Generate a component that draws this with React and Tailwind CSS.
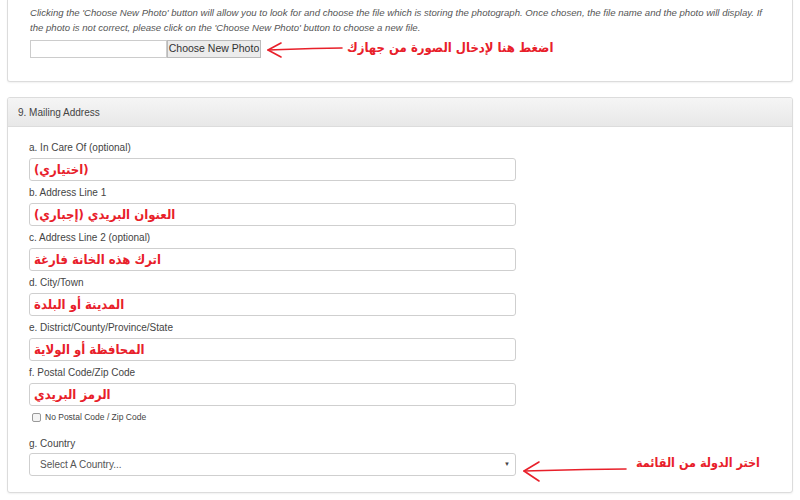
import React from "react";

const AR = { fontFamily: '"DejaVu Sans Condensed", "DejaVu Sans", sans-serif' };

function ArInput({ text }) {
  return (
    <div className="h-[23px] w-[487px] rounded-[3px] border border-[#cfcfcf] bg-white flex items-center pl-[4px] overflow-hidden">
      <span dir="rtl" className="text-[13px] font-bold text-[#e8202a] leading-none" style={AR}>{text}</span>
    </div>
  );
}

function Field({ label, text }) {
  return (
    <div className="flex flex-col">
      <div className="h-[22px] flex items-center text-[10px] text-[#444]">{label}</div>
      <ArInput text={text} />
    </div>
  );
}

function Arrow({ w, big }) {
  return (
    <svg width={w} height="24" viewBox={`0 0 ${w} 24`} className="shrink-0">
      <path d={`M2 12 Q ${w * 0.4} 11 ${w * 0.6} 10.5 T ${w - 2} 10`} stroke="#e8202a" strokeWidth="1.6" fill="none" strokeLinecap="round" />
      {big ? (
        <path d="M17 3 L2 12 L17 22" stroke="#e8202a" strokeWidth="1.6" fill="none" strokeLinecap="round" strokeLinejoin="round" />
      ) : (
        <path d="M15 5 L2 12 L15 19" stroke="#e8202a" strokeWidth="1.6" fill="none" strokeLinecap="round" strokeLinejoin="round" />
      )}
    </svg>
  );
}

export default function App() {
  return (
    <div className="w-[800px] h-[500px] overflow-hidden bg-white px-[7px] text-[#444]" style={{ fontFamily: '"Liberation Sans", Arial, sans-serif' }}>
      <div className="border border-t-0 border-[#dcdcdc] rounded-b-[3px] shadow-[0_1px_2px_rgba(0,0,0,0.06)] bg-white pl-[22px] pr-[24px] pt-[5px] h-[82px]">
        <p className="text-[9.6px] italic leading-[15px] text-[#555]">
          Clicking the 'Choose New Photo' button will allow you to look for and choose the file which is storing the photograph. Once chosen, the file name and the photo will display. If the photo is not correct, please click on the 'Choose New Photo' button to choose a new file.
        </p>
        <div className="flex items-center mt-[1px]">
          <div className="w-[137px] h-[18px] border border-[#ccc] bg-white" />
          <div className="w-[94px] h-[18px] border border-[#bbb] bg-[#ececec] text-[10.5px] text-[#333] flex items-center justify-center whitespace-nowrap">Choose New Photo</div>
          <div className="ml-[5px] mt-[2px]"><Arrow w={78} /></div>
          <span dir="rtl" className="ml-[3px] text-[13px] font-bold text-[#e8202a] -mt-[3px] whitespace-nowrap" style={AR}>اضغط هنا لإدخال الصورة من جهازك</span>
        </div>
      </div>

      <div className="mt-[15px] h-[396px] border border-[#dcdcdc] rounded-[3px] shadow-[0_1px_2px_rgba(0,0,0,0.06)] bg-white overflow-hidden">
        <div className="h-[29px] bg-gradient-to-b from-[#f5f5f5] to-[#e8e8e8] border-b border-[#dcdcdc] flex items-center pl-[10px] text-[10px] text-[#444]">
          9. Mailing Address
        </div>
        <div className="pl-[21px] pt-[9px] flex flex-col">
          <Field label="a. In Care Of (optional)" text="(اختياري)" />
          <Field label="b. Address Line 1" text="العنوان البريدي (إجباري)" />
          <Field label="c. Address Line 2 (optional)" text="اترك هذه الخانة فارغة" />
          <Field label="d. City/Town" text="المدينة أو البلدة" />
          <Field label="e. District/County/Province/State" text="المحافظة أو الولاية" />
          <Field label="f. Postal Code/Zip Code" text="الرمز البريدي" />
          <div className="flex items-center h-[22px] pl-[3px]">
            <div className="w-[9px] h-[9px] border border-[#999] rounded-[2px] bg-[#f4f4f4]" />
            <span className="ml-[4px] text-[8.5px] text-[#444]">No Postal Code / Zip Code</span>
          </div>
          <div className="h-[25px] mt-[3px] flex items-center text-[10px] text-[#444]">g. Country</div>
          <div className="flex items-start -mt-[3px]">
            <div className="h-[23px] w-[487px] rounded-[3px] border border-[#cfcfcf] bg-white flex items-center justify-between pl-[10px] pr-[5px]">
              <span className="text-[10px] text-[#555]">Select A Country...</span>
              <span className="text-[6px] text-[#444]">▼</span>
            </div>
            <div className="ml-[6px] mt-[6px]"><Arrow w={106} big /></div>
            <span dir="rtl" className="ml-[8px] mt-[1px] text-[12.5px] font-bold text-[#e8202a] whitespace-nowrap" style={AR}>اختر الدولة من القائمة</span>
          </div>
        </div>
      </div>
    </div>
  );
}
